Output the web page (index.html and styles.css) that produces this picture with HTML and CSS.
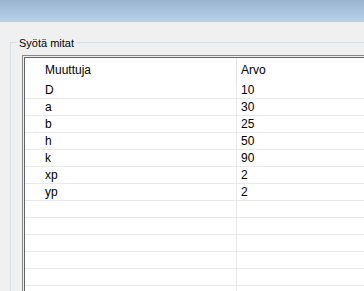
FILE: index.html
```html
<!DOCTYPE html>
<html>
<head>
<meta charset="utf-8">
<link rel="stylesheet" href="styles.css">
</head>
<body>
<div class="titlebar"></div>
<div class="content">
  <fieldset class="group">
    <legend class="group-title">Syötä mitat</legend>
    <div class="grid-frame">
      <div class="grid">
        <div class="row head">
          <div class="cell name">Muuttuja</div>
          <div class="cell val">Arvo</div>
        </div>
        <div class="row"><div class="cell name">D</div><div class="cell val">10</div></div>
        <div class="row"><div class="cell name">a</div><div class="cell val">30</div></div>
        <div class="row"><div class="cell name">b</div><div class="cell val">25</div></div>
        <div class="row"><div class="cell name">h</div><div class="cell val">50</div></div>
        <div class="row"><div class="cell name">k</div><div class="cell val">90</div></div>
        <div class="row"><div class="cell name">xp</div><div class="cell val">2</div></div>
        <div class="row"><div class="cell name">yp</div><div class="cell val">2</div></div>
        <div class="row"><div class="cell name"></div><div class="cell val"></div></div>
        <div class="row"><div class="cell name"></div><div class="cell val"></div></div>
        <div class="row"><div class="cell name"></div><div class="cell val"></div></div>
        <div class="row"><div class="cell name"></div><div class="cell val"></div></div>
        <div class="row"><div class="cell name"></div><div class="cell val"></div></div>
        <div class="row"><div class="cell name"></div><div class="cell val"></div></div>
      </div>
    </div>
  </fieldset>
</div>
</body>
</html>
```

FILE: styles.css
```css
html, body {
  margin: 0;
  padding: 0;
  overflow: hidden;
  width: 364px;
  height: 291px;
  background: #f0f0f0;
  font-family: "Liberation Sans", Arial, sans-serif;
  font-size: 12px;
  color: #000;
}

.titlebar {
  height: 22px;
  background: linear-gradient(to bottom, #99b4d1, #bad1e9);
}

.content {
  padding: 13px 0 0 10px;
  width: 460px;
}

.group {
  margin: 0;
  padding: 6px 0 20px 6px;
  border: 1px solid #d5dfe5;
  min-width: 0;
  width: 440px;
  box-sizing: border-box;
}

.group-title {
  padding: 2px 2px 0 2px;
  line-height: 12px;
  font-size: 11px;
}

.grid-frame {
  margin-left: 5px;
  border: 1px solid #828790;
  padding: 1px;
  background: #f0f0f0;
}

.grid {
  border: 1px solid #646464;
  background: #fff;
  height: 260px;
}

.row {
  display: flex;
  height: 16px;
  border-bottom: 1px solid #e9e9e9;
  line-height: 16px;
}

.row.head {
  height: 24px;
  line-height: 24px;
  border-bottom: none;
}

.cell {
  white-space: nowrap;
}

.name {
  width: 191px;
  padding-left: 20px;
  flex: none;
}

.val {
  flex: 1;
  padding-left: 4px;
  border-left: 1px solid #e9e9e9;
}

.head .val {
  border-left-color: #e3e3e3;
}
```
